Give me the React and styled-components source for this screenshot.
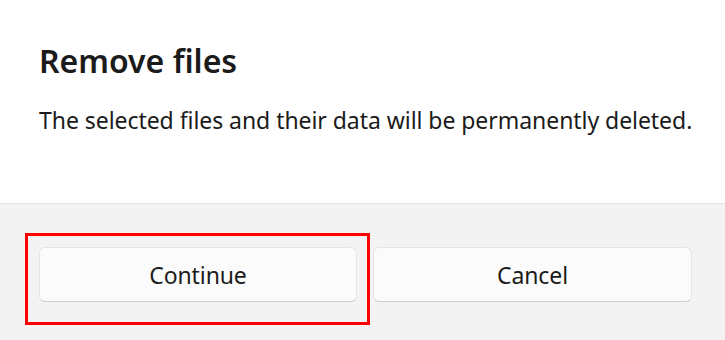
import React from "react";
import styled, { createGlobalStyle } from "styled-components";

const GlobalStyle = createGlobalStyle`
  html, body {
    margin: 0;
    padding: 0;
    background: #ffffff;
    font-family: "Noto Sans", "Open Sans", sans-serif;
    color: #1b1b1b;
  }
`;

const Dialog = styled.div`
  width: 725px;
  height: 340px;
  display: flex;
  flex-direction: column;
  overflow: hidden;
`;

const Content = styled.div`
  height: 204px;
  box-sizing: border-box;
  padding: 41px 20px 0 39px;
  background: #ffffff;
  border-bottom: 1px solid #e5e5e5;
`;

const Title = styled.h1`
  margin: 0;
  font-size: 32px;
  font-weight: 600;
  line-height: 40px;
`;

const Message = styled.p`
  margin: 24px 0 0;
  font-size: 23px;
  line-height: 30px;
  letter-spacing: -0.05px;
  white-space: nowrap;
`;

const Footer = styled.div`
  flex: 1;
  background: #f3f3f3;
  display: grid;
  grid-template-columns: 318px 319px;
  column-gap: 16px;
  padding: 43px 33px 0 39px;
  align-items: start;
`;

const Highlight = styled.div`
  position: relative;
  &::after {
    content: "";
    position: absolute;
    left: -14px;
    top: -14px;
    right: -13px;
    bottom: -23px;
    border: 3px solid #ff0000;
    pointer-events: none;
  }
`;

const Button = styled.button`
  width: 100%;
  height: 55px;
  box-sizing: border-box;
  background: #fbfbfb;
  border: 1px solid #e5e5e5;
  border-bottom-color: #cccccc;
  border-radius: 6px;
  font-family: inherit;
  font-size: 23px;
  letter-spacing: -0.1px;
  color: #1b1b1b;
  padding: 0;
`;

export default function App() {
  return (
    <>
      <GlobalStyle />
      <Dialog>
        <Content>
          <Title>Remove files</Title>
          <Message>
            The selected files and their data will be permanently deleted.
          </Message>
        </Content>
        <Footer>
          <Highlight>
            <Button>Continue</Button>
          </Highlight>
          <Button>Cancel</Button>
        </Footer>
      </Dialog>
    </>
  );
}
